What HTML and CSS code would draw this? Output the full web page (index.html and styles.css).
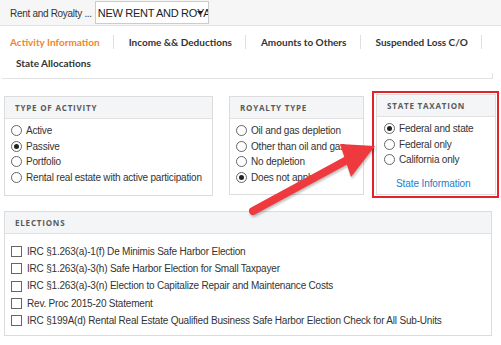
FILE: index.html
```html
<!DOCTYPE html>
<html lang="en">
<head>
  <meta charset="UTF-8" />
  <title>Rent and Royalty</title>
  <link rel="stylesheet" href="styles.css">
</head>
<body>

  <!-- Top bar -->
  <div class="topbar">
    <span class="form-name">Rent and Royalty ...</span>
    <div class="select">
      <span class="select-text">NEW RENT AND ROYALTY</span>
      <span class="select-caret"></span>
    </div>
  </div>

  <!-- Tabs -->
  <div class="tabs">
    <div class="tab-row">
      <span class="tab active">Activity Information</span>
      <span class="tab">Income &amp;&amp; Deductions</span>
      <span class="tab">Amounts to Others</span>
      <span class="tab">Suspended Loss C/O</span>
      <span class="tab">QBI</span>
    </div>
    <div class="tab-row">
      <span class="tab second">State Allocations</span>
    </div>
  </div>

  <!-- Panels -->
  <div class="content">
    <div class="panel-row">
      <div class="panel activity">
        <div class="panel-head">TYPE OF ACTIVITY</div>
        <div class="panel-body">
          <div class="opt"><span class="radio"></span>Active</div>
          <div class="opt"><span class="radio on"></span>Passive</div>
          <div class="opt"><span class="radio"></span>Portfolio</div>
          <div class="opt"><span class="radio"></span>Rental real estate with active participation</div>
        </div>
      </div>

      <div class="panel royalty">
        <div class="panel-head">ROYALTY TYPE</div>
        <div class="panel-body">
          <div class="opt"><span class="radio"></span>Oil and gas depletion</div>
          <div class="opt"><span class="radio"></span>Other than oil and gas</div>
          <div class="opt"><span class="radio"></span>No depletion</div>
          <div class="opt"><span class="radio on"></span>Does not apply</div>
        </div>
      </div>

      <div class="highlight">
        <div class="panel state">
          <div class="panel-head">STATE TAXATION</div>
          <div class="panel-body">
            <div class="opt"><span class="radio on"></span>Federal and state</div>
            <div class="opt"><span class="radio"></span>Federal only</div>
            <div class="opt"><span class="radio"></span>California only</div>
            <a class="state-link" href="#">State Information</a>
          </div>
        </div>
      </div>
    </div>

    <div class="panel elections">
      <div class="panel-head">ELECTIONS</div>
      <div class="panel-body">
        <div class="check-opt"><span class="checkbox"></span>IRC §1.263(a)-1(f) De Minimis Safe Harbor Election</div>
        <div class="check-opt"><span class="checkbox"></span>IRC §1.263(a)-3(h) Safe Harbor Election for Small Taxpayer</div>
        <div class="check-opt"><span class="checkbox"></span>IRC §1.263(a)-3(n) Election to Capitalize Repair and Maintenance Costs</div>
        <div class="check-opt"><span class="checkbox"></span>Rev. Proc 2015-20 Statement</div>
        <div class="check-opt"><span class="checkbox"></span>IRC §199A(d) Rental Real Estate Qualified Business Safe Harbor Election Check for All Sub-Units</div>
      </div>
    </div>
  </div>

  <!-- Annotation arrow -->
  <svg class="arrow" width="501" height="345" viewBox="0 0 501 345">
    <line x1="253" y1="211" x2="347" y2="160" stroke="#ee3a3f" stroke-width="8" stroke-linecap="round" />
    <polygon points="375,146 340,144 351,177" fill="#ee3a3f" />
  </svg>

</body>
</html>
```

FILE: styles.css
```css
/* General */
body {
  margin: 0;
  padding: 0;
  background: #fff;
  font-family: "Liberation Sans", Arial, sans-serif;
  color: #333;
  width: 501px;
  height: 345px;
  overflow: hidden;
  position: relative;
}

/* Top bar */
.topbar {
  height: 26px;
  background: #f6f6f6;
  border-bottom: 1px solid #e4e4e4;
  display: flex;
  align-items: center;
  padding-left: 10px;
  box-sizing: border-box;
}

.form-name {
  font-size: 10px;
  letter-spacing: -0.3px;
  color: #333;
  margin-right: 3px;
  margin-top: 2px;
}

.select {
  position: relative;
  width: 114px;
  height: 23px;
  background: #fff;
  border: 1px solid #ccc;
  box-sizing: border-box;
  overflow: hidden;
  display: flex;
  align-items: center;
  padding-left: 2px;
}

.select-text {
  font-size: 11px;
  letter-spacing: -0.3px;
  color: #222;
  white-space: nowrap;
}

.select-caret {
  position: absolute;
  right: 5px;
  top: 9px;
  border-left: 3px solid transparent;
  border-right: 3px solid transparent;
  border-top: 4px solid #222;
}

/* Tabs */
.tabs {
  position: relative;
  margin: 0 8px 0 2px;
  border-bottom: 1px solid #e2e2e2;
  padding: 9px 0 8px;
  overflow: hidden;
}

.tabs::after {
  content: "";
  position: absolute;
  right: 0;
  bottom: 0;
  height: 5px;
  border-right: 1px solid #e2e2e2;
}

.tab-row {
  display: flex;
  white-space: nowrap;
}

.tab {
  font-family: Lato, "Open Sans", sans-serif;
  font-weight: 700;
  font-size: 10px;
  color: #333;
  padding: 0 13px 0 15px;
  line-height: 14px;
  border-right: 1px solid #e0e0e0;
}

.tab.active {
  color: #f5841f;
  padding-left: 8px;
}

.tab.second {
  border-right: none;
  padding-left: 14px;
  margin-top: 7px;
}

/* Panels */
.content {
  padding: 12px 0 0 4px;
}

.panel-row {
  display: flex;
  align-items: flex-start;
}

.panel {
  border: 1px solid #dcdcdc;
  background: #fff;
  box-sizing: border-box;
  flex-shrink: 0;
}

.panel-head {
  height: 21px;
  line-height: 21px;
  background: #f4f5f6;
  border-bottom: 1px solid #e2e2e2;
  padding-left: 10px;
  font-family: "Open Sans", sans-serif;
  font-weight: 700;
  font-size: 8px;
  letter-spacing: 0.8px;
  color: #5a5a5a;
}

.panel-body {
  padding: 4px 0 0 6px;
}

.activity {
  width: 209px;
  height: 100px;
  margin-top: 5px;
}

.royalty {
  width: 135px;
  height: 99px;
  margin: 5px 0 0 16px;
}

.highlight {
  border: 2px solid #e3222c;
  padding: 1px 1px 1px 2px;
  margin-left: 8px;
  flex-shrink: 0;
}

.state {
  width: 120px;
  height: 101px;
}

.state .panel-body {
  padding-left: 7px;
}

.opt {
  display: flex;
  align-items: center;
  font-size: 10px;
  letter-spacing: -0.2px;
  line-height: 15.5px;
  color: #333;
}

.radio {
  width: 9px;
  height: 9px;
  border: 1px solid #666;
  border-radius: 50%;
  margin-right: 4px;
  position: relative;
  flex-shrink: 0;
}

.radio.on::after {
  content: "";
  position: absolute;
  left: 2px;
  top: 2px;
  width: 5px;
  height: 5px;
  border-radius: 50%;
  background: #222;
}

.state-link {
  display: block;
  margin: 10px 0 0 12px;
  font-size: 10px;
  letter-spacing: -0.1px;
  color: #1d7cc8;
  text-decoration: none;
}

/* Elections */
.elections {
  margin-top: 13px;
  width: 488px;
  height: 125px;
}

.elections .panel-body {
  padding-top: 9px;
}

.check-opt {
  display: flex;
  align-items: center;
  font-size: 10px;
  letter-spacing: -0.2px;
  line-height: 17.2px;
  color: #333;
}

.checkbox {
  width: 9px;
  height: 9px;
  border: 1px solid #666;
  margin-right: 5px;
  flex-shrink: 0;
}

/* Annotation */
.arrow {
  position: absolute;
  left: 0;
  top: 0;
  pointer-events: none;
  filter: drop-shadow(1px 2px 1px rgba(0, 0, 0, 0.25));
}
```
